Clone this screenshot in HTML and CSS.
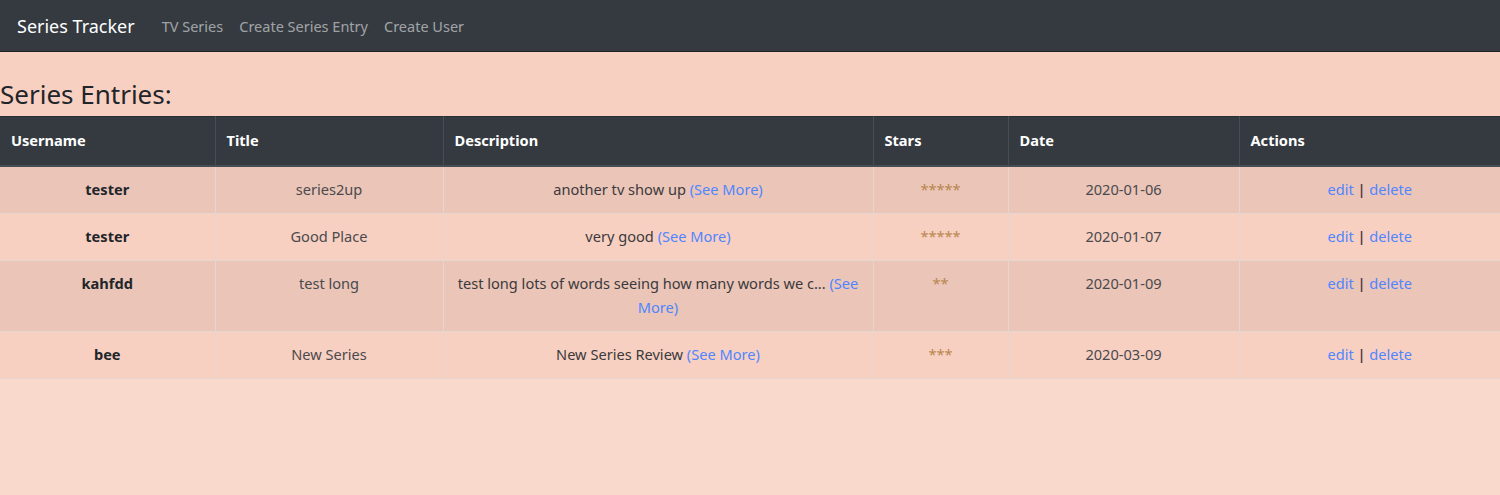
FILE: index.html
```html
<!DOCTYPE html>
<html lang="en">
<head>
<meta charset="utf-8">
<title>Series Tracker</title>
<link rel="stylesheet" href="styles.css">
</head>
<body>
<nav class="navbar">
  <a class="brand" href="#">Series Tracker</a>
  <ul class="nav-links">
    <li><a href="#">TV Series</a></li>
    <li><a href="#">Create Series Entry</a></li>
    <li><a href="#">Create User</a></li>
  </ul>
</nav>
<main class="content">
  <h3 class="page-title">Series Entries:</h3>
  <table class="entries">
    <colgroup>
      <col class="c-user"><col class="c-title"><col class="c-desc"><col class="c-stars"><col class="c-date"><col class="c-actions">
    </colgroup>
    <thead>
      <tr><th>Username</th><th>Title</th><th>Description</th><th>Stars</th><th>Date</th><th>Actions</th></tr>
    </thead>
    <tbody>
      <tr>
        <td class="user">tester</td>
        <td class="muted">series2up</td>
        <td>another tv show up <a href="#">(See More)</a></td>
        <td class="stars">*****</td>
        <td class="muted">2020-01-06</td>
        <td><a href="#">edit</a> <span class="sep">|</span> <a href="#">delete</a></td>
      </tr>
      <tr>
        <td class="user">tester</td>
        <td class="muted">Good Place</td>
        <td>very good <a href="#">(See More)</a></td>
        <td class="stars">*****</td>
        <td class="muted">2020-01-07</td>
        <td><a href="#">edit</a> <span class="sep">|</span> <a href="#">delete</a></td>
      </tr>
      <tr>
        <td class="user">kahfdd</td>
        <td class="muted">test long</td>
        <td>test long lots of words seeing how many words we c... <a href="#">(See More)</a></td>
        <td class="stars">**</td>
        <td class="muted">2020-01-09</td>
        <td><a href="#">edit</a> <span class="sep">|</span> <a href="#">delete</a></td>
      </tr>
      <tr>
        <td class="user">bee</td>
        <td class="muted">New Series</td>
        <td>New Series Review <a href="#">(See More)</a></td>
        <td class="stars">***</td>
        <td class="muted">2020-03-09</td>
        <td><a href="#">edit</a> <span class="sep">|</span> <a href="#">delete</a></td>
      </tr>
    </tbody>
  </table>
</main>
</body>
</html>
```
FILE: styles.css
```css
* { box-sizing: border-box; }
html, body { margin: 0; padding: 0; }
body {
  background: #f8d9cb;
  font-family: "Noto Sans", "Open Sans", sans-serif;
  font-size: 14.6px;
  line-height: 23.5px;
  color: #212529;
}
a { text-decoration: none; color: #4f86ff; }

.navbar {
  display: flex;
  align-items: center;
  height: 52px;
  padding: 3px 17px 0;
  background: #343a40;
  border-bottom: 1px solid #1e2226;
}
.brand {
  color: #fff;
  font-size: 18px;
  margin-right: 19px;
}
.nav-links {
  display: flex;
  list-style: none;
  margin: 0;
  padding: 0;
}
.nav-links a {
  display: block;
  padding: 0 8px;
  color: rgba(255, 255, 255, 0.55);
  font-size: 14.5px;
}

.content {
  background: #f8d0c2;
}
.page-title {
  margin: 0;
  padding: 24px 0 4px;
  font-size: 26px;
  font-weight: 400;
  line-height: 36px;
}

.entries {
  width: 100%;
  border-collapse: collapse;
  table-layout: fixed;
}
.c-user { width: 215px; }
.c-title { width: 228px; }
.c-desc { width: 430px; }
.c-stars { width: 135px; }
.c-date { width: 231px; }
.c-actions { width: 261px; }

.entries th {
  background: #343a40;
  color: #fff;
  font-weight: 700;
  text-align: left;
  padding: 12px 11px;
  border: 1px solid #454d55;
  border-bottom-width: 2px;
  border-top: 1px solid #2a2f34;
}
.entries td {
  text-align: center;
  vertical-align: top;
  padding: 11.4px 10px;
  border: 1px solid #e6d6d0;
  border-top: 0;
  color: #3b3a3c;
}
.entries th:first-child, .entries td:first-child { border-left: 0; }
.entries th:last-child, .entries td:last-child { border-right: 0; }
.entries tbody tr:nth-child(odd) { background: rgba(0, 0, 0, 0.05); }
.entries td.user { font-weight: 700; color: #212529; }
.entries td.muted { color: #4a4a4d; }
.entries td.stars { color: #b8874f; }
.sep { color: #4a3848; font-weight: 600; }
```
